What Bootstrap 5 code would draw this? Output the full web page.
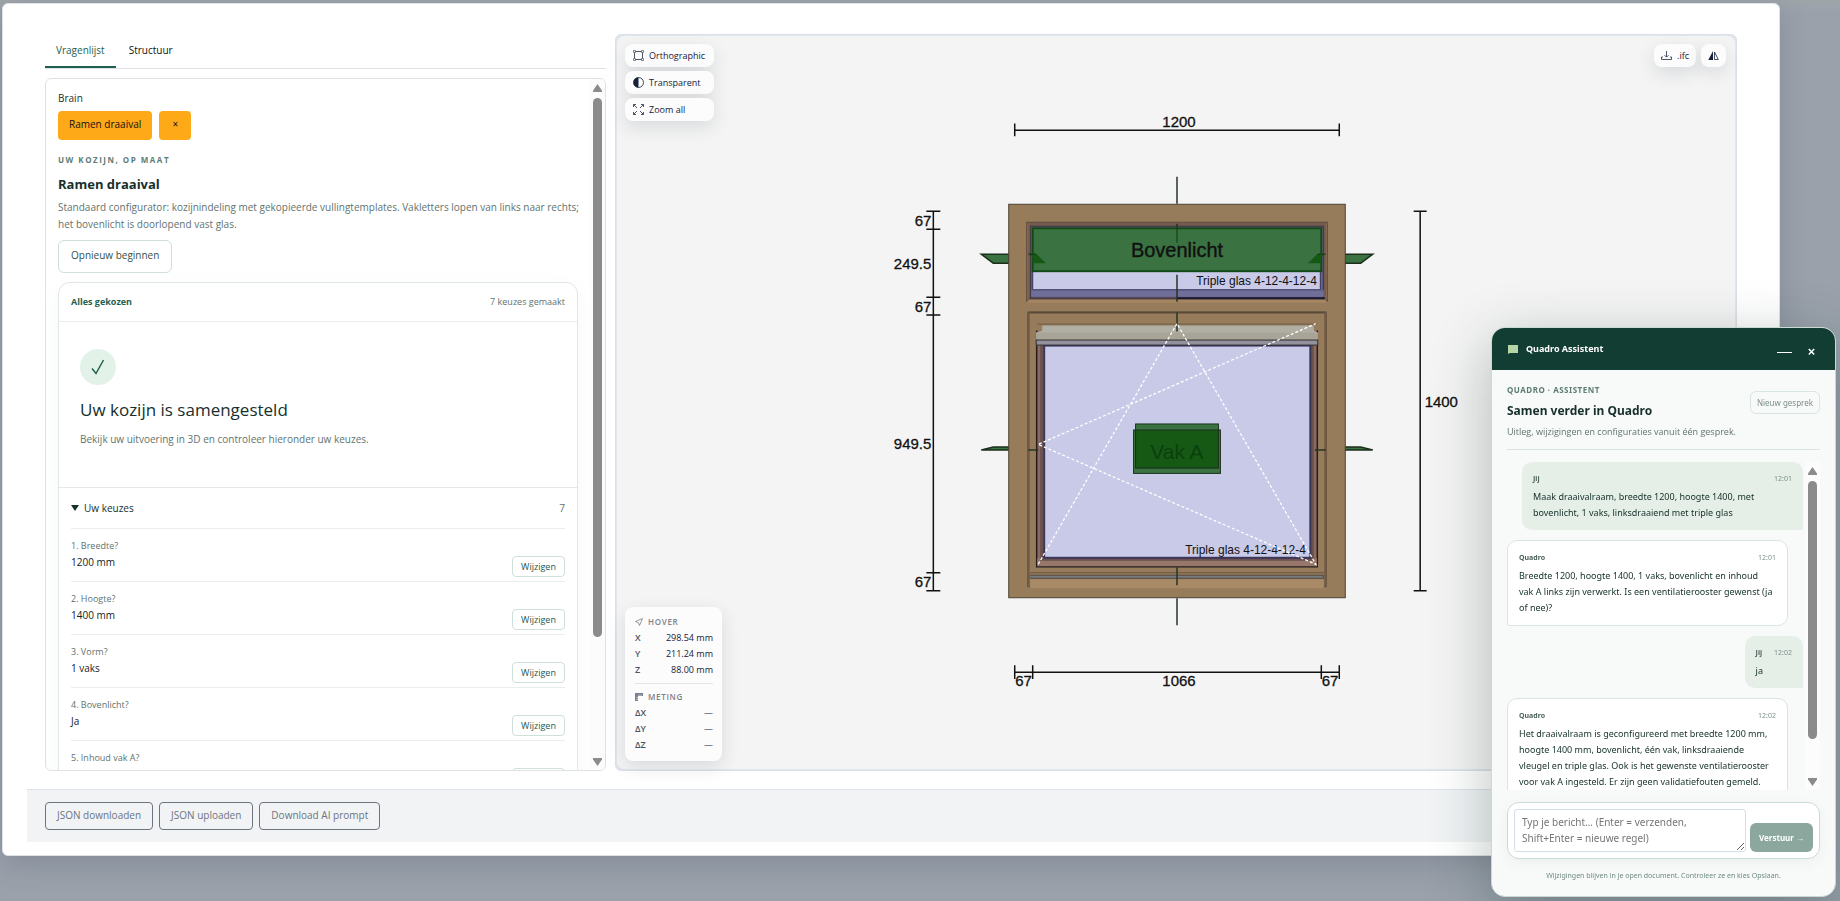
<!DOCTYPE html>
<html lang="nl">
<head>
<meta charset="utf-8">
<meta name="viewport" content="width=device-width, initial-scale=1">
<title>Quadro configurator</title>
<link href="https://cdn.jsdelivr.net/npm/bootstrap@5.3.0/dist/css/bootstrap.min.css" rel="stylesheet">
<style>
:root{--line:#dee2e6;--soft:#dfe7e4;--ink:#17302c;--muted:#61736f;--green:#1f6050}
body{font-family:"Open Sans","Noto Sans",sans-serif;font-size:10px;line-height:16px;color:var(--ink);background:#9aa1ab;height:100vh;overflow:hidden}
button{font-family:inherit}
.stage{height:100vh;padding:3px 60px 45px 2px;background:linear-gradient(#9ea5a9 0,#9ea5a9 4px,#9aa1ab 12px)}
.dialog-box{background:#fff;border:1px solid var(--line);border-radius:6px;padding:30px 24px 13px;box-shadow:0 8px 28px rgba(60,70,90,.22)}
.work{display:grid;grid-template-columns:1fr 2fr;gap:9px;padding:0 18px 18px;min-height:0}
.work>section{min-width:0;min-height:0}
.tabs{border-bottom:1px solid var(--line);height:35px;gap:2px}
.tabs .nav-link{padding:8px 11px 9px;color:#111;font-size:10px;line-height:16px;border-radius:0;border-bottom:2px solid transparent;height:34px}
.tabs .nav-link.active{color:var(--green);border-color:var(--green)}
.form-panel{border:1px solid var(--line);border-radius:6px;margin-top:9px;overflow:hidden;min-height:0}
.scroller{overflow:auto;scrollbar-width:none}
.scroller::-webkit-scrollbar{display:none}
.questions{padding:11px 12px 0}
.rail{width:15px;background:#fcfcfc;padding:5px 0 4px;flex:none}
.rail svg{flex:none;fill:#8b8b8b}
.rail i{width:9px;border-radius:5px;background:#8b8b8b;margin:6px 0 0}
.rail-form i{flex:0 0 79%}
.rail-chat{margin-left:2px}
.rail-chat i{flex:0 0 81%}
.muted{color:var(--muted)}
.brain-row{gap:7px;margin-top:5px}
.btn-brain{background:#fea918;color:#111;border:0;border-radius:4px;font-size:10px;line-height:16px;padding:5px 11px 8px}
.btn-brain:hover{background:#f39c05}
.btn-remove{width:32px}
.eyebrow{font-size:8px;line-height:12px;font-weight:700;color:#5c7d75;letter-spacing:.5px}
.eyebrow-wide{letter-spacing:1.5px;margin-top:14px}
.lead-text{color:var(--muted);line-height:17px;margin:6px -6px 7px 0}
.title-sm{font-size:13px;line-height:18px;font-weight:700;margin:9px 0 0}
.btn-line{background:#fff;border:1px solid #cfdfda;border-radius:6px;color:#35504a;font-size:10px;line-height:16px;padding:6px 12px 9px}
.quiz{border:1px solid var(--soft);border-radius:12px;box-shadow:0 6px 24px rgba(20,50,40,.03);margin-top:9px}
.quiz-head{padding:11px 12px;height:39px;border-bottom:1px solid #e8eeec;font-size:9px}
.quiz-head b{color:var(--green)}
.quiz-done{padding:27px 21px 40px;border-bottom:1px solid #e3e9e7}
.tick{width:36px;height:36px;background:#e3f2e9}
.title-lg{font-size:17px;line-height:24px;font-weight:500;margin:13px 0 9px}
.choices{padding:0 12px}
.choices summary{list-style:none;height:41px;border-bottom:1px solid #e8eeec}
.choices summary::-webkit-details-marker{display:none}
.choice{height:53px;border-bottom:1px solid #e8eeec;padding:10px 0 4px}
.choice span{display:block;font-size:9px;line-height:14px;color:var(--muted)}
.choice strong{display:block;font-weight:500;line-height:17px;margin-top:1px;color:#14211f}
.btn-edit{background:#fff;border:1px solid #cfdfda;border-radius:4px;color:#23574c;font-size:9px;line-height:13px;padding:3px 7px;width:53px;height:21px}
.viewer{border:1px solid #dbe1e8;border-radius:6px;padding:1px;background:#e1e6ec}
.canvas-area{background:#f4f4f4;border-radius:8px}
.scene{font-family:"Liberation Sans",Arial,sans-serif;font-size:15px;fill:#111}
.float{background:#fcfcfc;border:0;border-radius:8px;color:#16203a;font-size:9px;line-height:13px;font-weight:500;box-shadow:0 6px 18px rgba(20,30,50,.12)}
.tool{height:23px;padding:0 7px;gap:5px;text-align:left}
.tools-left{top:8px;left:8px;gap:4px;width:89px}
.tools-left .tool{padding-left:8px}
.tools-right{top:8px;right:9px;gap:5px}
.readout{left:8px;bottom:8px;width:97px;padding:8px 9px 8px 10px}
.readout h3{font-size:8px;line-height:13px;font-weight:600;letter-spacing:.7px;color:#7b828d;margin:0 0 2px;gap:5px}
.readout dl{margin:0}
.readout dl div{height:16px;line-height:16px}
.readout dt{color:#4b5563;font-weight:600}
.readout dd{margin:0}
.readout hr{margin:5px 0 6px;color:#9aa1ab}
.foot-bar{background:#f1f3f5;border-top:1px solid var(--line);padding:12px 18px;gap:6px}
.foot-bar .btn{font-size:10px;line-height:16px;padding:4px 11px 6px;border-radius:4px;height:28px}
.chat{position:fixed;right:4px;bottom:4px;width:345px;height:570px;font-family:"Noto Sans","Open Sans",sans-serif;background:#f8faf9;border:1px solid #c9d9d3;border-radius:14px;overflow:hidden;box-shadow:0 16px 60px rgba(15,45,35,.3);z-index:5}
.chat-head{background:#123d33;color:#fff;height:42px;padding:0 20px 0 16px;flex:none}
.chat-head strong{font-size:9px}
.chat-head button{background:none;border:0;color:#fff;padding:4px 0 0}
.chat-intro{margin:14px 15px 0;padding-bottom:10px;border-bottom:1px solid #d8e5e0}
.chat-intro h2{font-size:12px;line-height:18px;font-weight:700;margin:6px 0 5px}
.chat-intro p{font-size:9px;line-height:14px;font-family:"Open Sans",sans-serif;color:var(--muted);margin:0}
.btn-new{background:#f8faf9;border:1px solid #d8e5e0;border-radius:6px;color:#7d8f8a;font-size:8px;line-height:13px;height:23px;width:70px;padding:0;margin-top:7px}
.chat-log{margin:12px 15px 0;min-height:0}
.messages{gap:10px}
.bubble{font-size:9px;width:281px;padding:11px 11px 9px;flex:none;color:#14302a}
.bubble header{font-size:7px;line-height:11px;margin-bottom:5px;color:#7d8f8a;gap:12px}
.bubble header b{color:#4d635e}
.mine{background:#e5eee7;border-radius:10px 10px 2px 10px}
.theirs{background:#fff;border:1px solid #d8e5e0;border-radius:10px 10px 10px 2px;align-self:flex-start;padding-right:14px}
.theirs header{margin-right:-3px}
.composer{margin:12px 15px 0;background:#fff;border:1px solid #c9dcd4;border-radius:12px;padding:6px;gap:4px;box-shadow:0 4px 14px rgba(20,50,40,.05)}
.composer textarea{font-size:10px;line-height:16px;padding:4px 7px;height:43px;border-radius:3px;border-color:#d5dde8}
.composer textarea::placeholder{color:#757575}
.btn-send{background:#8ba79e;color:#fff;border:0;border-radius:6px;font-size:8px;font-weight:700;width:63px;height:29px;flex:none;padding:0}
.chat-note{font-size:7px;line-height:12px;color:#6f8a82;margin:11px 0 14px}
</style>
</head>
<body>
<main class="stage d-flex">
<div class="dialog-box d-flex flex-column flex-grow-1">
  <div class="work flex-grow-1">
    <section class="d-flex flex-column">
      <nav class="nav tabs">
        <a class="nav-link active" href="#vragenlijst">Vragenlijst</a>
        <a class="nav-link" href="#structuur">Structuur</a>
      </nav>
      <div class="form-panel d-flex flex-grow-1" id="vragenlijst">
        <div class="scroller questions flex-grow-1">
          <div>Brain</div>
          <div class="d-flex brain-row">
            <button class="btn-brain" type="button">Ramen draaival</button>
            <button class="btn-brain btn-remove" type="button" aria-label="Verwijderen">×</button>
          </div>
          <div class="eyebrow eyebrow-wide">UW KOZIJN, OP MAAT</div>
          <h1 class="title-sm">Ramen draaival</h1>
          <p class="lead-text">Standaard configurator: kozijnindeling met gekopieerde vullingtemplates. Vakletters lopen van links naar rechts; het bovenlicht is doorlopend vast glas.</p>
          <button class="btn-line" type="button">Opnieuw beginnen</button>
          <div class="quiz">
            <div class="quiz-head d-flex justify-content-between"><b>Alles gekozen</b><span class="muted">7 keuzes gemaakt</span></div>
            <div class="quiz-done">
              <div class="tick rounded-circle d-flex align-items-center justify-content-center"><svg width="16" height="16" viewBox="0 0 16 16" fill="none" stroke="#1f6050" stroke-width="1.5"><path d="M2 9.500l4 5L13.500 1"/></svg></div>
              <h2 class="title-lg">Uw kozijn is samengesteld</h2>
              <p class="m-0 muted">Bekijk uw uitvoering in 3D en controleer hieronder uw keuzes.</p>
            </div>
            <details class="choices" open>
              <summary class="d-flex align-items-center"><svg class="me-1" width="9" height="8"><path d="M0 1h8L4 7z" fill="#17302c"/></svg><span class="fw-medium">Uw keuzes</span><span class="ms-auto muted">7</span></summary>
              <div class="choice d-flex justify-content-between"><div><span>1. Breedte?</span><strong>1200 mm</strong></div><button class="btn-edit align-self-end" type="button">Wijzigen</button></div>
              <div class="choice d-flex justify-content-between"><div><span>2. Hoogte?</span><strong>1400 mm</strong></div><button class="btn-edit align-self-end" type="button">Wijzigen</button></div>
              <div class="choice d-flex justify-content-between"><div><span>3. Vorm?</span><strong>1 vaks</strong></div><button class="btn-edit align-self-end" type="button">Wijzigen</button></div>
              <div class="choice d-flex justify-content-between"><div><span>4. Bovenlicht?</span><strong>Ja</strong></div><button class="btn-edit align-self-end" type="button">Wijzigen</button></div>
              <div class="choice d-flex justify-content-between"><div><span>5. Inhoud vak A?</span><strong>Draaival, links</strong></div><button class="btn-edit align-self-end" type="button">Wijzigen</button></div>
            </details>
          </div>
        </div>
        <div class="rail rail-form d-flex flex-column align-items-center">
          <svg width="9" height="8"><path d="M4.500 0L9 6.500V8H0V6.500z"/></svg><i></i>
          <svg class="mt-auto" width="9" height="8"><path d="M4.500 8L9 1.500V0H0v1.500z"/></svg>
        </div>
      </div>
    </section>

    <section class="viewer">
      <div class="canvas-area position-relative h-100">
        <svg class="scene d-block w-100 h-100" viewBox="617 36 1118 734" role="img" aria-label="Vooraanzicht van het kozijn">
          <g fill="#3a7341" stroke="#1c2f1c" stroke-width="1.500">
            <path d="M981 254.500h28v9h-16zM1345 254.500h28l-12 9h-16z"/>
            <path d="M981 450.500l12-3h16v3zM1373 450.500l-12-3h-16v3z"/>
          </g>
          <rect x="1008.500" y="204.500" width="337" height="394" fill="#967c5b" stroke="#4c4233"/>
          <rect x="1026.500" y="222.500" width="301" height="79" fill="#8b7056" stroke="#5b4838"/>
          <rect x="1028" y="223" width="298" height="78" fill="#745b50"/>
          <rect x="1030.500" y="226.500" width="293" height="72" fill="#6b628a" stroke="#3b3440"/>
          <rect x="1032.500" y="271" width="288" height="19" fill="#c9c9e8" stroke="#34345a"/>
          <rect x="1031" y="290" width="293" height="7" fill="#706f99"/>
          <path d="M1031 290.500h293" stroke="#55557c"/>
          <path d="M1029 298.500h148" stroke="#4c3c3c"/>
          <path d="M1177 298.500h148" stroke="#1a1a2c" stroke-width="2"/>
          <path d="M1026 303h302l-3-3h-296z" fill="#a58662"/>
          <rect x="1032.500" y="228.500" width="289" height="43" fill="#3a7341" stroke="#154a18" stroke-width="2"/>
          <path d="M1029 254h7l10 9.500h-13v-5zM1325 254h-7l-10 9.500h13v-5z" fill="#155915"/>
          <path d="M1028 254.500h8M1318 254.500h8" stroke="#15351c"/>
          <text x="1177" y="257" font-size="20" text-anchor="middle" stroke="#111" stroke-width=".4">Bovenlicht</text>
          <text x="1317" y="285" font-size="12" text-anchor="end">Triple glas 4-12-4-12-4</text>

          <rect x="1027.500" y="312.500" width="299" height="275" fill="#967c5b" stroke="#655240"/>
          <path d="M1028 313h298" stroke="#5b4a39" stroke-width="2"/>
          <path d="M1028.500 313v274M1325.500 313v274" stroke="#705a42" stroke-width="2"/>
          <path d="M1036.500 331v236.500h281V331" fill="#896b5f" stroke="#231d22" stroke-width="1.500"/>
          <rect x="1037" y="559" width="280" height="8" fill="#96776a"/>
          <path d="M1041.500 345v215h271V345" fill="none" stroke="#6b5050" stroke-width="3"/>
          <rect x="1044" y="346" width="266.500" height="212.500" fill="#c9c9e8" stroke="#3c355a" stroke-width="2"/>
          <path d="M1042 326h272v5l4 2v7h-282v-7l6-2z" fill="#b1aea4"/>
          <path d="M1036 333h282v7h-282z" fill="#a8a598"/>
          <path d="M1037 324.500h280" stroke="#705b45"/>
          <path d="M1036 340.500h282v5h-282z" fill="#92919c" stroke="#343238"/>
          <rect x="1030" y="580" width="294" height="9" fill="#a98a66"/>
          <path d="M1030 573.500h294" stroke="#6a543f"/>
          <path d="M1030 577.500h294" stroke="#53493f" stroke-width="4"/>
          <path d="M1030 577.500h293" stroke="#777b82" stroke-width="2"/>
          <g stroke="#273427" stroke-width="1.500"><path d="M1177 177v27M1177 224v6M1177 275v27M1177 313v19M1177 568v18M1177 599v27M1028 450.500h10M1315 450.500h11"/><path d="M1177 230v13" stroke="#164d1b"/></g>
          <text x="1306" y="555" font-size="12" text-anchor="end">Triple glas 4-12-4-12-4</text>
          <g stroke="#1d331d"><rect x="1133.500" y="430.500" width="87" height="43.500" fill="#3a7341"/><rect x="1135.500" y="424.500" width="83" height="44" fill="#3a7341"/><rect x="1135.500" y="430.500" width="83" height="38" fill="#155915"/></g>
          <text x="1177" y="460" font-size="21" text-anchor="middle" fill="#0b400d">Vak A</text>
          <path d="M1038 565l139-241 139 241-278-120 278-121" fill="none" stroke="#fff" stroke-width="1.300" stroke-dasharray="3 2"/>

          <g stroke="#111" stroke-width="1.500" fill="none">
            <path d="M1014.500 130.500h325M1014.500 123.500v13M1339.500 123.500v13"/>
            <path d="M1420.500 211.500v380M1414 211.500h13M1414 591.500h13"/>
            <path d="M1014.500 673h325M1014.500 666v14M1032.500 666v14M1321.500 666v14M1339.500 666v14"/>
            <path d="M933 211.500v380M926 211.500h14M926 229.500h14M926 297.500h14M926 315.500h14M926 573.500h14M926 591.500h14"/>
          </g>
          <g stroke="#111" stroke-width=".3">
            <text x="1179" y="127.500" text-anchor="middle">1200</text>
            <text x="1425" y="408">1400</text>
            <text x="1179" y="687" text-anchor="middle">1066</text>
            <text x="1015" y="687">67</text><text x="1322" y="687">67</text>
            <g text-anchor="end"><text x="931" y="226">67</text><text x="931" y="269">249.5</text><text x="931" y="312">67</text><text x="931" y="450">949.5</text><text x="931" y="588">67</text></g>
          </g>
        </svg>
        <div class="tools-left position-absolute d-flex flex-column">
          <button class="float tool d-flex align-items-center" type="button"><svg width="11" height="11" viewBox="0 0 11 11" fill="none" stroke="#4b5366"><path d="M1.500 1.500h8v8h-8z"/><path d="M.5.500h2v2h-2zM8.500.500h2v2h-2zM.5 8.500h2v2h-2zM8.500 8.500h2v2h-2z" fill="#fff" stroke-width=".7"/></svg>Orthographic</button>
          <button class="float tool d-flex align-items-center" type="button"><svg width="11" height="11" viewBox="0 0 11 11"><circle cx="5.500" cy="5.500" r="5" fill="none" stroke="#16203a" stroke-width=".8"/><path d="M5.500.500a5 5 0 0 0 0 10z" fill="#16203a"/></svg>Transparent</button>
          <button class="float tool d-flex align-items-center" type="button"><svg width="11" height="11" viewBox="0 0 11 11" fill="none" stroke="#3c4456" stroke-width=".9"><path d="M.5 3V.500H3M.5.500L4 4M8 .500h2.500V3M10.500.500L7 4M.5 8v2.500H3M.5 10.500L4 7M8 10.500h2.500V8M10.500 10.500L7 7"/></svg>Zoom all</button>
        </div>
        <div class="tools-right position-absolute d-flex">
          <button class="float tool d-flex align-items-center" type="button"><svg width="11" height="11" viewBox="0 0 11 11" fill="none" stroke="#3c4456" stroke-width=".9"><path d="M2 7H.5v2.500h10V7H9M5.500 1v6M3.500 5.200l2 2 2-2"/></svg>.ifc</button>
          <button class="float tool d-flex align-items-center" type="button" aria-label="Spiegelen"><svg width="11" height="11" viewBox="0 0 11 11"><path d="M5 1v9H.3z" fill="#16203a"/><path d="M6.500 2v7.500h3.800z" fill="none" stroke="#16203a" stroke-width=".8"/></svg></button>
        </div>
        <div class="float readout position-absolute">
          <h3 class="d-flex align-items-center"><svg width="8" height="8" viewBox="0 0 8 8" fill="none" stroke="#7b828d" stroke-width=".8"><path d="M7.500.500L.5 3.500l2.800 1.200L4.500 7.500z"/></svg>HOVER</h3>
          <dl><div class="d-flex justify-content-between"><dt>X</dt><dd>298.54 mm</dd></div><div class="d-flex justify-content-between"><dt>Y</dt><dd>211.24 mm</dd></div><div class="d-flex justify-content-between"><dt>Z</dt><dd>88.00 mm</dd></div></dl>
          <hr>
          <h3 class="d-flex align-items-center"><svg width="8" height="8" viewBox="0 0 8 8"><path d="M0 0h8v3H3v5H0z" fill="#7b828d"/><path d="M4 3V1.500M6 3V1.500M3 4.500H1.500M3 6.500H1.500" stroke="#fff" stroke-width=".6"/></svg>METING</h3>
          <dl><div class="d-flex justify-content-between"><dt>ΔX</dt><dd>—</dd></div><div class="d-flex justify-content-between"><dt>ΔY</dt><dd>—</dd></div><div class="d-flex justify-content-between"><dt>ΔZ</dt><dd>—</dd></div></dl>
        </div>
      </div>
    </section>
  </div>
  <footer class="foot-bar d-flex">
    <button class="btn btn-outline-secondary" type="button">JSON downloaden</button>
    <button class="btn btn-outline-secondary" type="button">JSON uploaden</button>
    <button class="btn btn-outline-secondary" type="button">Download AI prompt</button>
  </footer>
</div>
</main>

<aside class="chat d-flex flex-column" aria-label="Quadro Assistent">
  <header class="chat-head d-flex align-items-center">
    <svg class="me-2" width="10" height="9" viewBox="0 0 10 9"><path d="M0 0h10v8H2L0 9z" fill="#b5d5a5"/></svg>
    <strong>Quadro Assistent</strong>
    <button class="ms-auto d-flex" type="button" aria-label="Minimaliseren"><svg width="15" height="6"><path d="M0 4.500h15" stroke="#fff"/></svg></button>
    <button class="ms-3 d-flex" type="button" aria-label="Sluiten"><svg width="7" height="9"><path d="M.8 2l5.400 5.500M6.200 2L.8 7.500" stroke="#fff" stroke-width="1.500"/></svg></button>
  </header>
  <div class="chat-intro d-flex justify-content-between align-items-start">
    <div>
      <div class="eyebrow">QUADRO · ASSISTENT</div>
      <h2>Samen verder in Quadro</h2>
      <p>Uitleg, wijzigingen en configuraties vanuit één gesprek.</p>
    </div>
    <button class="btn-new" type="button">Nieuw gesprek</button>
  </div>
  <div class="chat-log d-flex flex-grow-1">
    <div class="scroller messages flex-grow-1 d-flex flex-column align-items-end">
      <article class="bubble mine"><header class="d-flex justify-content-between"><b>Jij</b><time>12:01</time></header>Maak draaivalraam, breedte 1200, hoogte 1400, met bovenlicht, 1 vaks, linksdraaiend met triple glas</article>
      <article class="bubble theirs"><header class="d-flex justify-content-between"><b>Quadro</b><time>12:01</time></header>Breedte 1200, hoogte 1400, 1 vaks, bovenlicht en inhoud vak A links zijn verwerkt. Is een ventilatierooster gewenst (ja of nee)?</article>
      <article class="bubble mine w-auto"><header class="d-flex justify-content-between"><b>Jij</b><time>12:02</time></header>ja</article>
      <article class="bubble theirs"><header class="d-flex justify-content-between"><b>Quadro</b><time>12:02</time></header>Het draaivalraam is geconfigureerd met breedte 1200 mm, hoogte 1400 mm, bovenlicht, één vak, linksdraaiende vleugel en triple glas. Ook is het gewenste ventilatierooster voor vak A ingesteld. Er zijn geen validatiefouten gemeld.</article>
    </div>
    <div class="rail rail-chat d-flex flex-column align-items-center">
      <svg width="9" height="8"><path d="M4.500 0L9 6.500V8H0V6.500z"/></svg><i></i>
      <svg class="mt-auto" width="9" height="8"><path d="M4.500 8L9 1.500V0H0v1.500z"/></svg>
    </div>
  </div>
  <form class="composer d-flex align-items-end">
    <textarea class="form-control" aria-label="Bericht" placeholder="Typ je bericht… (Enter = verzenden, Shift+Enter = nieuwe regel)"></textarea>
    <button class="btn-send" type="button">Verstuur →</button>
  </form>
  <p class="chat-note text-center">Wijzigingen blijven in je open document. Controleer ze en kies Opslaan.</p>
</aside>
<script src="https://cdn.jsdelivr.net/npm/bootstrap@5.3.0/dist/js/bootstrap.bundle.min.js"></script>
</body>
</html>
